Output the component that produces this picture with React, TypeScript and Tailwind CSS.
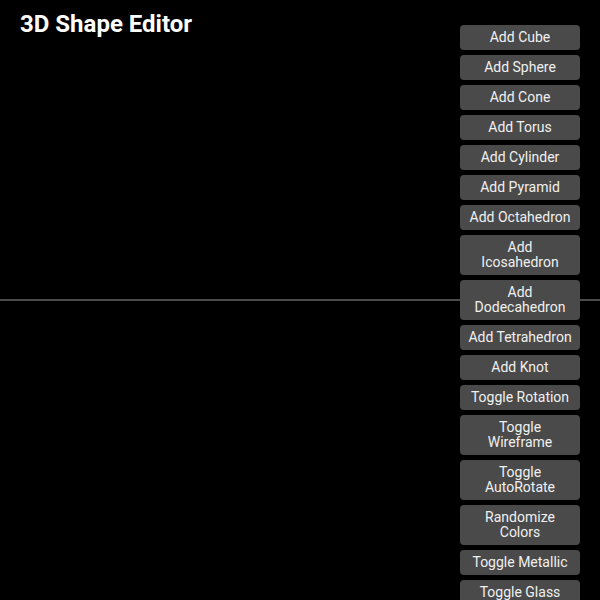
const buttons = [
  'Add Cube',
  'Add Sphere',
  'Add Cone',
  'Add Torus',
  'Add Cylinder',
  'Add Pyramid',
  'Add Octahedron',
  'Add\nIcosahedron',
  'Add\nDodecahedron',
  'Add Tetrahedron',
  'Add Knot',
  'Toggle Rotation',
  'Toggle\nWireframe',
  'Toggle\nAutoRotate',
  'Randomize\nColors',
  'Toggle Metallic',
  'Toggle Glass',
  'Toggle Shadows',
];

export default function App() {
  return (
    <div className="relative h-[600px] w-[600px] overflow-hidden bg-black font-['Roboto',sans-serif]">
      {/* canvas: grid helper seen edge-on */}
      <div className="absolute left-0 top-[299px] h-[2px] w-full bg-[#4a4a4a]" />

      <h1 className="absolute left-[20px] top-[10px] text-[24px] font-bold leading-[28px] text-white">
        3D Shape Editor
      </h1>

      {/* control panel */}
      <div className="absolute right-[20px] top-[25px] flex w-[120px] flex-col gap-[5px]">
        {buttons.map(b => (
          <button
            key={b}
            className="w-full whitespace-pre-line rounded-[4px] bg-[#4a4a4a] px-[6px] py-[5px] text-center text-[14px] leading-[15px] text-[#f0f0f0]"
          >
            {b}
          </button>
        ))}
      </div>
    </div>
  );
}
